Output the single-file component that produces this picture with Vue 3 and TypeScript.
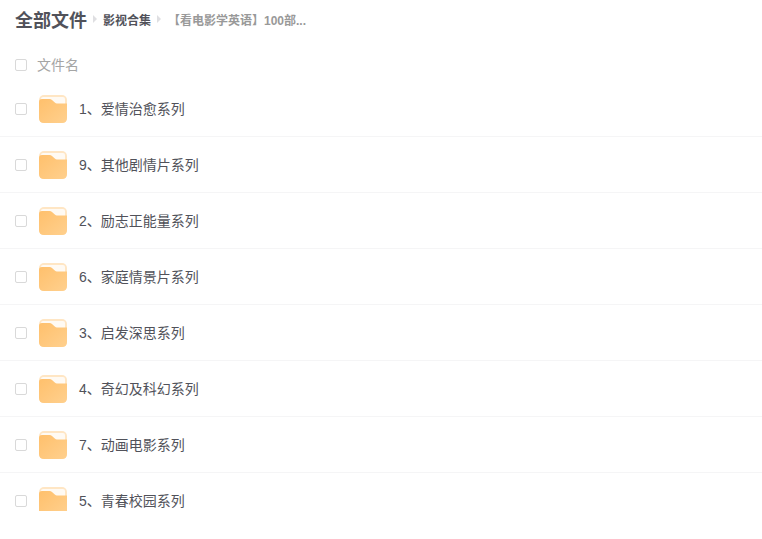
<script setup lang="ts">
const rows: string[] = [
  '1、爱情治愈系列',
  '9、其他剧情片系列',
  '2、励志正能量系列',
  '6、家庭情景片系列',
  '3、启发深思系列',
  '4、奇幻及科幻系列',
  '7、动画电影系列',
  '5、青春校园系列',
]
</script>

<template>
  <div class="page">
    <header class="crumbs">
      <span class="root">全部文件</span>
      <span class="arrow"></span>
      <span class="mid">影视合集</span>
      <span class="arrow"></span>
      <span class="last">【看电影学英语】100部...</span>
    </header>
    <div class="head">
      <span class="check"></span>
      <span class="head-name">文件名</span>
    </div>
    <div class="list">
      <div v-for="name in rows" :key="name" class="row">
        <span class="check"></span>
        <svg class="folder" width="28" height="28" viewBox="0 0 28 28">
          <defs>
            <linearGradient id="fg" x1="0" y1="0" x2="1" y2="1">
              <stop offset="0" stop-color="#ffc06c" />
              <stop offset="1" stop-color="#ffd08e" />
            </linearGradient>
          </defs>
          <rect x="0" y="0" width="28" height="28" rx="5" fill="#ffe6c4" />
          <rect x="2" y="2" width="24" height="14" rx="2" fill="#fffaf3" />
          <path d="M0 7 Q0 4 3 4 H10.5 Q12 4 13 5 L15.8 7.6 Q16.8 8.5 18 8.5 H28 V23 Q28 28 23 28 H5 Q0 28 0 23 Z" fill="url(#fg)" />
        </svg>
        <span class="name">{{ name }}</span>
      </div>
    </div>
  </div>
</template>

<style scoped>
.page {
  width: 762px;
  height: 539px;
  overflow: hidden;
  background: #fff;
  font-family: "Liberation Sans", "Noto Sans CJK SC", sans-serif;
}
.crumbs {
  display: flex;
  align-items: center;
  height: 38px;
  padding-left: 15px;
  white-space: nowrap;
}
.root {
  font-size: 18px;
  font-weight: 700;
  color: #51525a;
}
.arrow {
  width: 0;
  height: 0;
  margin: 0 6px;
  border-left: 4px solid #dfdfe2;
  border-top: 4px solid transparent;
  border-bottom: 4px solid transparent;
}
.mid {
  font-size: 12px;
  font-weight: 700;
  color: #51525a;
}
.last {
  font-size: 12px;
  font-weight: 700;
  color: #999;
  margin-left: 1px;
}
.head {
  display: flex;
  align-items: center;
  height: 54px;
  padding-left: 15px;
}
.head-name {
  margin-left: 10px;
  font-size: 14px;
  line-height: 16px;
  color: #a5a5a5;
}
.check {
  flex: none;
  box-sizing: border-box;
  width: 12px;
  height: 12px;
  border: 1px solid #d9d9d9;
  border-radius: 2px;
}
.list {
  height: 430px;
  overflow: hidden;
  margin-top: -11px;
}
.row {
  box-sizing: border-box;
  display: flex;
  align-items: center;
  height: 56px;
  padding-left: 15px;
  border-bottom: 1px solid #f5f5f6;
}
.folder {
  flex: none;
  margin-left: 12px;
}
.name {
  margin-left: 12px;
  font-size: 14px;
  line-height: 16px;
  color: #51525a;
}
</style>
